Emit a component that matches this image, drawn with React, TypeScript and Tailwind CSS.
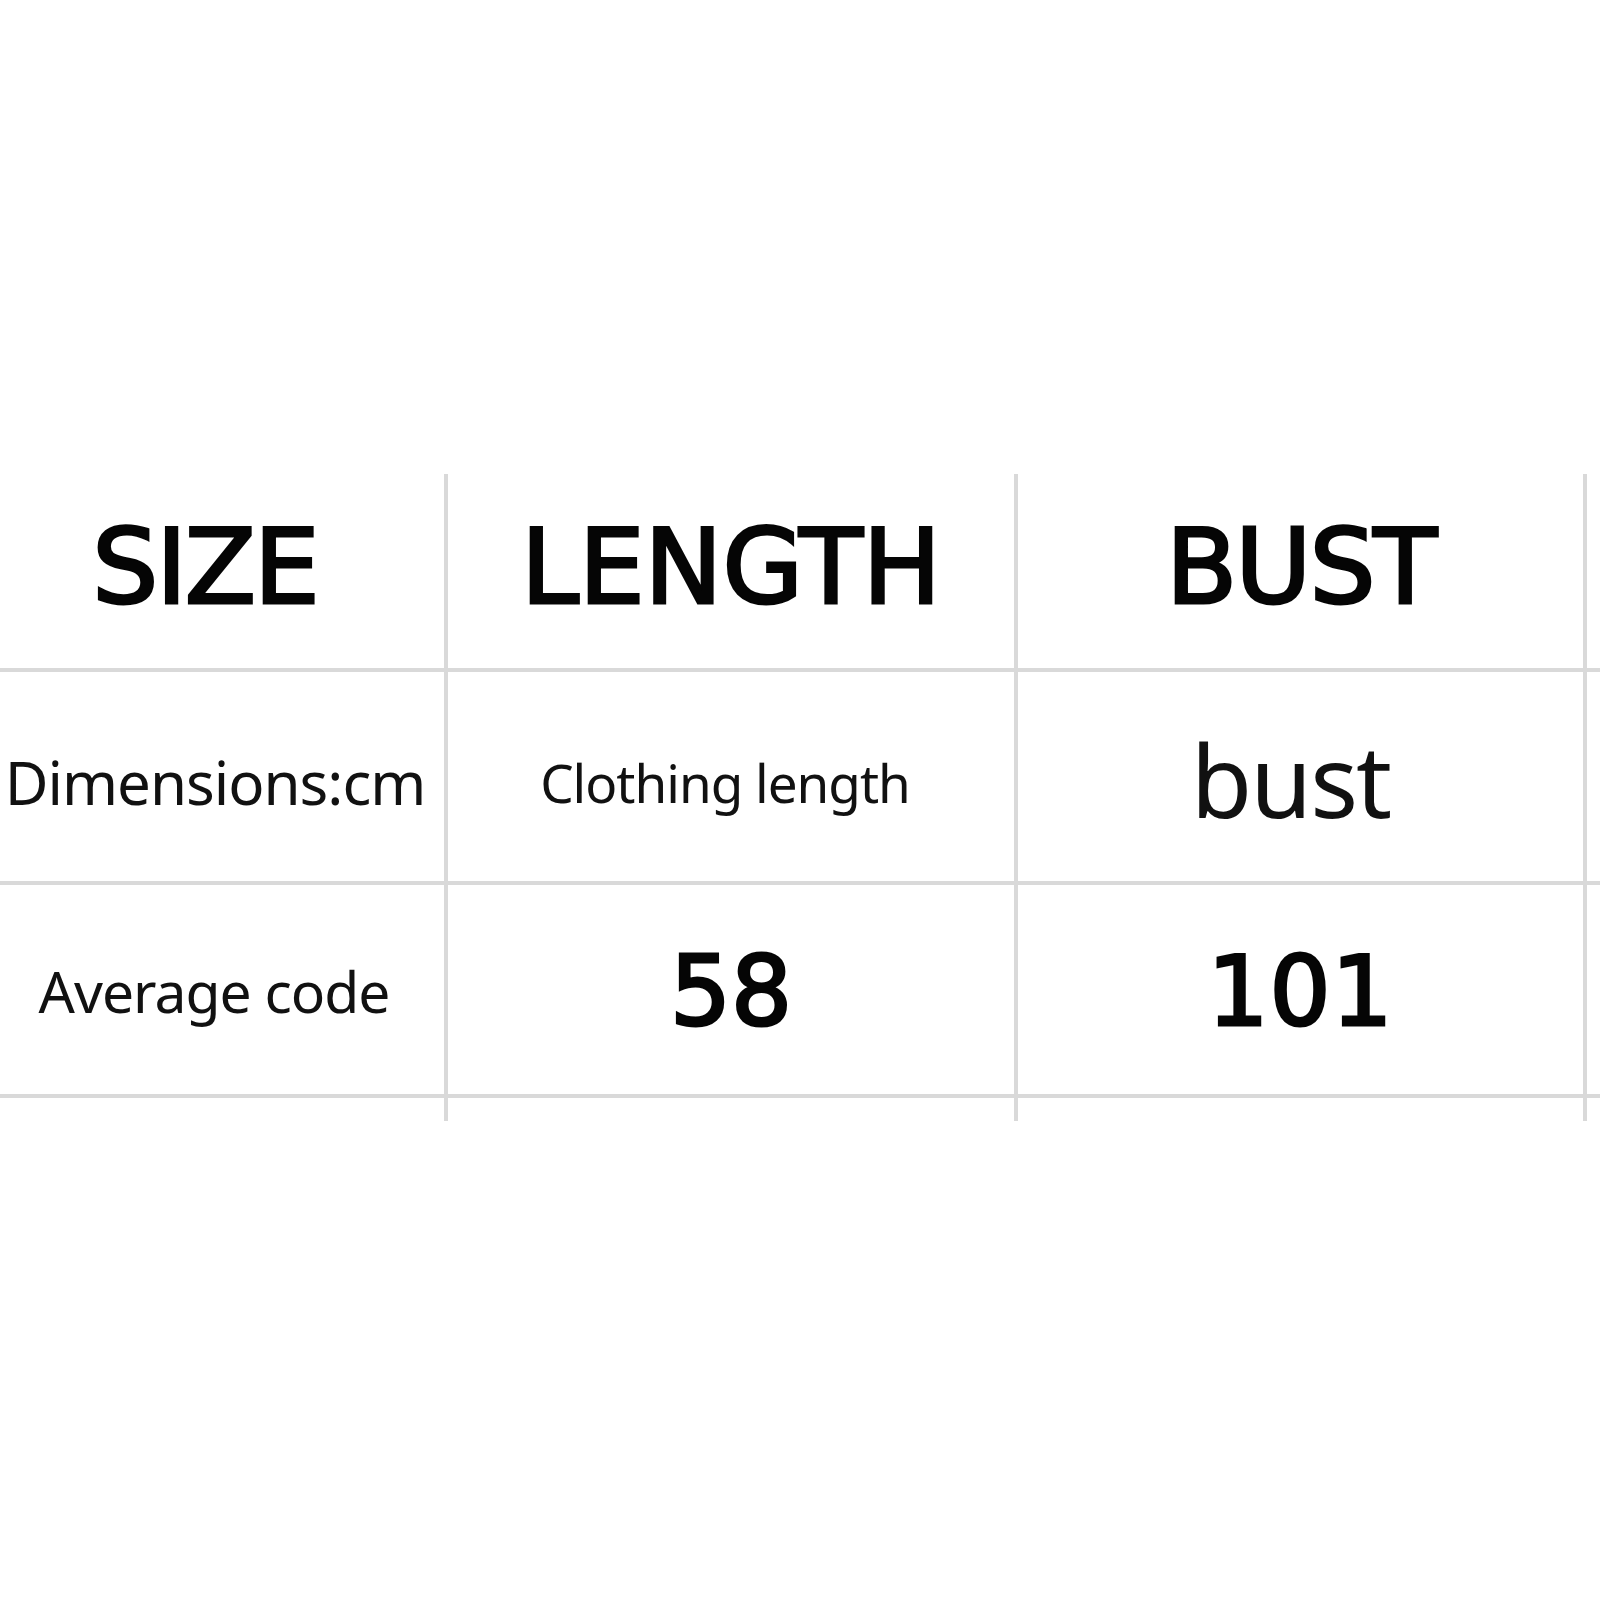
import React from "react";

const head = "font-['DejaVu_Sans',sans-serif] text-[#050505] [-webkit-text-stroke-width:3px] [-webkit-text-stroke-color:#050505] [paint-order:stroke_fill]";
const body = "font-['Noto_Sans','Open_Sans',sans-serif] text-[#111111]";

const cell = "flex items-center justify-center border-[#d9d9d9]";

const App: React.FC = () => {
  return (
    <div className="w-[1600px] h-[1600px] bg-white overflow-hidden">
      <div className="pt-[474px] grid grid-cols-[448px_570px_569px_1fr] grid-rows-[198px_213px_213px_23px]">
        {/* header */}
        <div className={`${cell} border-r-4 border-b-4 pr-[34px] pb-[8px]`}>
          <span className={`${head} text-[104px] tracking-[-2px] leading-none`}>SIZE</span>
        </div>
        <div className={`${cell} border-r-4 border-b-4 pb-[8px]`}>
          <span className={`${head} text-[104px] tracking-[0px] leading-none`}>LENGTH</span>
        </div>
        <div className={`${cell} border-r-4 border-b-4 pb-[8px]`}>
          <span className={`${head} text-[104px] tracking-[-2px] leading-none`}>BUST</span>
        </div>
        <div className={`${cell} border-b-4`} />

        {/* units */}
        <div className={`${cell} border-r-4 border-b-4 pr-[14px] pt-[10px]`}>
          <span className={`${body} text-[60px] tracking-[-1px] leading-none whitespace-nowrap`}>Dimensions:cm</span>
        </div>
        <div className={`${cell} border-r-4 border-b-4 pr-[12px] pt-[12px]`}>
          <span className={`${body} text-[53px] tracking-[-1px] leading-none`}>Clothing length</span>
        </div>
        <div className={`${cell} border-r-4 border-b-4 pr-[20px] pt-[4px]`}>
          <span className={`${body} text-[100px] tracking-[-2px] leading-none`}>bust</span>
        </div>
        <div className={`${cell} border-b-4`} />

        {/* values */}
        <div className={`${cell} border-r-4 border-b-4 pr-[16px] pt-[4px]`}>
          <span className={`${body} text-[57px] tracking-[-1px] leading-none`}>Average code</span>
        </div>
        <div className={`${cell} border-r-4 border-b-4 pt-[4px]`}>
          <span className={`${head} text-[96px] leading-none`}>58</span>
        </div>
        <div className={`${cell} border-r-4 border-b-4 pt-[4px]`}>
          <span className={`${head} text-[96px] tracking-[1px] leading-none`}>101</span>
        </div>
        <div className={`${cell} border-b-4`} />

        {/* trailing stubs */}
        <div className={`${cell} border-r-4`} />
        <div className={`${cell} border-r-4`} />
        <div className={`${cell} border-r-4`} />
        <div />
      </div>
    </div>
  );
};

export default App;
